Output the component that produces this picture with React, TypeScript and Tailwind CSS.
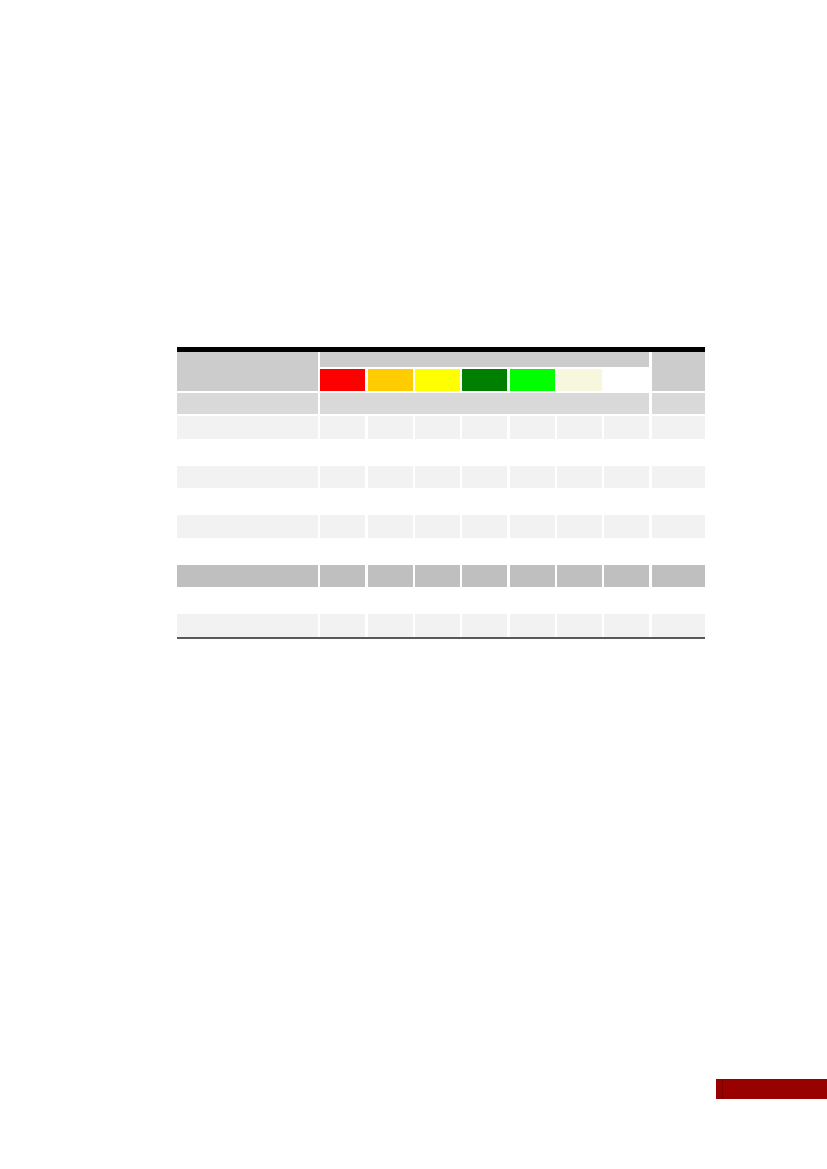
const swatches = ["bg-[#ff0000]", "bg-[#ffcc00]", "bg-[#ffff00]", "bg-[#008000]", "bg-[#00ff00]", "bg-[#f7f7de]", "bg-white"];

// body rows: fill colour per row (white = spacer row)
const rows = [
  "bg-[#f2f2f2]",
  "bg-white",
  "bg-[#f2f2f2]",
  "bg-white",
  "bg-[#f2f2f2]",
  "bg-white",
  "bg-[#bfbfbf]",
  "bg-white",
  "bg-[#f2f2f2]",
];

function BodyRow({ fill }: { fill: string }) {
  return (
    <>
      {Array.from({ length: 9 }).map((_, i) => (
        <div key={i} className={`h-[22.75px] ${fill}`} />
      ))}
    </>
  );
}

export default function App() {
  return (
    <div className="w-[827px] h-[1169px] bg-white flex flex-col font-['Liberation_Sans',sans-serif]">
      <div className="pt-[347px] pl-[177px]">
        <div className="w-[528px] border-t-[5px] border-black border-b-2 border-b-[#595959]">
          <div className="grid grid-cols-[141px_repeat(7,45px)_1fr] gap-x-[2.33px] gap-y-[2px]">
            {/* header */}
            <div className="row-span-2 bg-[#cccccc]" />
            <div className="col-span-7 h-[15px] bg-[#cccccc]" />
            <div className="row-span-2 bg-[#cccccc]" />
            {swatches.map((c, i) => (
              <div key={i} className={`h-[22px] ${c}`} />
            ))}

            {/* sub header */}
            <div className="h-[21px] bg-[#d9d9d9]" />
            <div className="col-span-7 bg-[#d9d9d9]" />
            <div className="bg-[#d9d9d9]" />

            {rows.map((fill, i) => (
              <BodyRow key={i} fill={fill} />
            ))}
          </div>
        </div>
      </div>

      <div className="mt-[440px] ml-auto w-[111px] h-[20px] bg-[#990000] flex">
        <div className="ml-[6px] w-px h-full bg-[#7a0000]" />
      </div>
    </div>
  );
}
